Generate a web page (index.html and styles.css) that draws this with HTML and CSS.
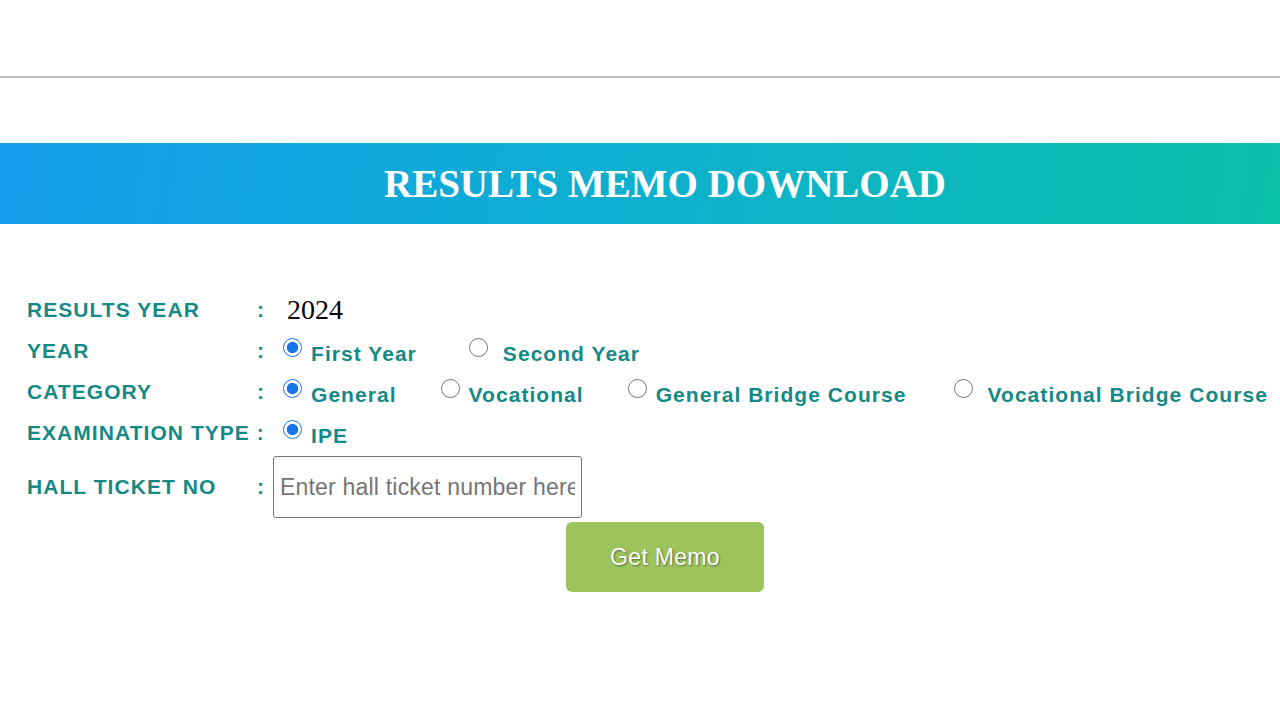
FILE: index.html
```html
<!DOCTYPE html>
<html>
<head>
<meta charset="utf-8">
<link rel="stylesheet" href="styles.css">
</head>
<body>
<div class="topbar"></div>
<div class="band"><h1 class="title">RESULTS MEMO DOWNLOAD</h1></div>
<form class="form">
  <div class="lbl">RESULTS YEAR</div><div class="colon">:</div>
  <div class="val"><span class="year">2024</span></div>

  <div class="lbl">YEAR</div><div class="colon">:</div>
  <div class="val">
    <label class="opt"><input type="radio" name="yr" checked><span>First Year</span></label>
    <label class="opt opt-second wide"><input type="radio" name="yr"><span>Second Year</span></label>
  </div>

  <div class="lbl">CATEGORY</div><div class="colon">:</div>
  <div class="val">
    <label class="opt opt-gen"><input type="radio" name="cat" checked><span>General</span></label>
    <label class="opt opt-voc"><input type="radio" name="cat"><span>Vocational</span></label>
    <label class="opt opt-gbc"><input type="radio" name="cat"><span>General Bridge Course</span></label>
    <label class="opt opt-vbc wide"><input type="radio" name="cat"><span>Vocational Bridge Course</span></label>
  </div>

  <div class="lbl lbl-span">EXAMINATION TYPE :</div>
  <div class="val">
    <label class="opt"><input type="radio" name="et" checked><span>IPE</span></label>
  </div>

  <div class="lbl hall">HALL TICKET NO</div><div class="colon hall">:</div>
  <div class="val hall"><input class="ticket" type="text" placeholder="Enter hall ticket number here"></div>

  <div class="btnrow"><button class="btn" type="button">Get Memo</button></div>
</form>
</body>
</html>
```
FILE: styles.css
```css
html, body {
  margin: 0;
  padding: 0;
  background: #ffffff;
}
body {
  width: 1280px;
  height: 720px;
  overflow: hidden;
  font-family: "Liberation Sans", Arial, sans-serif;
}
.topbar {
  height: 76px;
  border-bottom: 2px solid #bdbdbd;
}
.band {
  margin-top: 65px;
  height: 81px;
  padding-left: 50px;
  background: linear-gradient(100deg, #169cec 0%, #0db0cf 50%, #0cbfa8 100%);
  display: flex;
  align-items: center;
  justify-content: center;
}
.title {
  margin: 0;
  font-family: "Liberation Serif", "Times New Roman", serif;
  font-weight: bold;
  font-size: 39px;
  letter-spacing: 0;
  color: #ffffff;
}
.form {
  margin: 0;
  padding: 65px 0 0 27px;
  display: grid;
  grid-template-columns: 227px 19px 1fr;
  grid-template-rows: 41px 41px 41px 41px 66px;
  align-items: center;
}
.lbl, .colon, .opt span {
  color: #138a85;
  font-weight: bold;
  font-size: 21px;
  letter-spacing: 1.05px;
}
.colon {
  padding-left: 3px;
}
.lbl-span {
  grid-column: 1 / span 2;
  white-space: nowrap;
}
.val {
  display: flex;
  align-items: center;
}
.year {
  font-family: "Liberation Serif", "Times New Roman", serif;
  font-size: 28px;
  color: #000000;
  padding-left: 14px;
}
.opt {
  display: flex;
  align-items: center;
  gap: 9px;
  margin-left: 10px;
  white-space: nowrap;
}
.opt.wide {
  gap: 15px;
}
.opt span {
  padding-top: 6px;
}
.opt input {
  width: 19px;
  height: 19px;
  margin: 0 0 6px 0;
  accent-color: #1a73e8;
}
.opt-second { margin-left: 52px; }
.opt-voc { margin-left: 44px; }
.opt-gbc { margin-left: 44px; }
.opt-vbc { margin-left: 47px; }
.hall {
  height: 62px;
  margin-top: 3px;
  align-self: start;
}
.lbl.hall, .colon.hall {
  display: flex;
  align-items: center;
}
.ticket {
  box-sizing: border-box;
  width: 309px;
  height: 62px;
  border: 1px solid #767676;
  border-radius: 3px;
  padding: 0 6px;
  font-family: "Liberation Sans", Arial, sans-serif;
  font-size: 23px;
  letter-spacing: 0.2px;
  color: #333;
  background: #fff;
}
.ticket::placeholder {
  color: #757575;
}
.btnrow {
  grid-column: 3;
  height: 70px;
  display: flex;
  align-self: start;
  margin-top: 3px;
}
.btn {
  margin-left: 293px;
  width: 198px;
  height: 70px;
  border: none;
  border-radius: 6px;
  background: #9dc35e;
  color: #ffffff;
  font-family: "Liberation Sans", Arial, sans-serif;
  font-size: 23px;
  letter-spacing: 0.3px;
  text-shadow: 1px 1px 2px rgba(0, 0, 0, 0.45);
  cursor: pointer;
}
```
